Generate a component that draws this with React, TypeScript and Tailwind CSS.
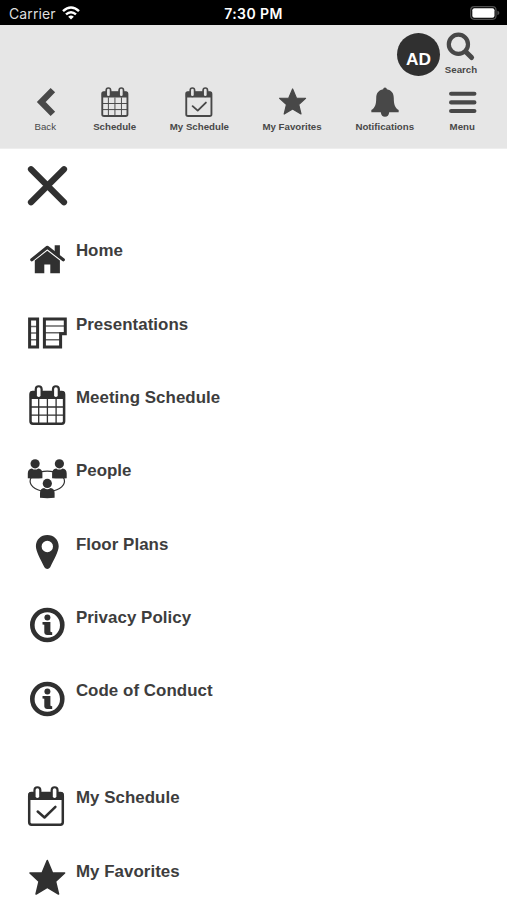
import type { ReactNode } from "react";

const FONT = "font-['Liberation_Sans',Arial,sans-serif]";

function Svg({ children, className }: { children: ReactNode; className: string }) {
  return (
    <svg viewBox="0 0 40 40" fill="currentColor" className={`shrink-0 overflow-visible ${className}`} aria-hidden="true">
      {children}
    </svg>
  );
}

const Rings = () => (
  <>
    {[11.2, 28.4].map((x) => (
      <g key={x}>
        <rect x={x - 4} y="0.2" width="8" height="13.4" rx="4" />
        <rect x={x - 1.8} y="2.2" width="3.6" height="9.8" rx="1.8" className="fill-white" />
      </g>
    ))}
  </>
);

const CalendarShell = () => (
  <>
    <rect x="3" y="7" width="33.6" height="31.7" rx="2.4" fill="none" stroke="currentColor" strokeWidth="2.5" />
    <rect x="2.4" y="6.2" width="34.8" height="7.8" rx="1.5" />
    <Rings />
  </>
);

const CalendarGrid = () => (
  <>
    <CalendarShell />
    <path d="M11.2 14V38M19.9 14V38M28.6 14V38M3 22H36.5M3 30.1H36.5" fill="none" stroke="currentColor" strokeWidth="1.3" />
  </>
);

const CalendarCheck = () => (
  <>
    <CalendarShell />
    <path d="M11.5 25.5L18.3 31.5L29.2 20.8" fill="none" stroke="currentColor" strokeWidth="2.5" strokeLinecap="round" strokeLinejoin="round" />
  </>
);

const Star = () => (
  <path
    d="M19.8 1.6L25 14H37.1L28 22.4L31 35L19.8 28.4L8.6 35L11.6 22.4L2.5 14H14.6Z"
    stroke="currentColor"
    strokeWidth="1.6"
    strokeLinejoin="round"
  />
);

const House = () => (
  <>
    <path d="M4.3 20.8L19.8 8.3L35.8 20.8" fill="none" stroke="currentColor" strokeWidth="3.2" strokeLinecap="round" strokeLinejoin="round" />
    <path d="M27.2 6.3H32.4V17.5L27.2 13.4Z" />
    <path d="M7.3 21.5L19.8 11.8L32.4 21.5V34.2H22.8V25.5H16.8V34.2H7.3Z" />
  </>
);

const Presentations = () => (
  <g fill="none" stroke="currentColor">
    <path d="M2 14.5H10M2 21H10M2 27.7H10M17 14H38M17 20.7H38M17 27.7H33" strokeWidth="1.5" opacity="0.75" />
    <path d="M2.1 7.1H10.1V34.9H2.1Z" strokeWidth="3" />
    <path d="M16.9 7.1H37.8V21.8H33.1V34.9H16.9Z" strokeWidth="3" />
  </g>
);

const Person = ({ x, y }: { x: number; y: number }) => (
  <g transform={`translate(${x} ${y})`}>
    <path d="M-7.3 14.4V9.7Q-7.3 4.9 -3.2 4.6Q0 7 3.2 4.6Q7.3 4.9 7.3 9.7V14.4Q0 15.2 -7.3 14.4Z" />
    <circle r="4.6" />
  </g>
);

const People = () => (
  <>
    <ellipse cx="19.8" cy="22.3" rx="17.2" ry="10.2" fill="none" stroke="currentColor" strokeWidth="1.2" />
    <Person x={7.6} y={4.8} />
    <Person x={31.9} y={4.8} />
    <Person x={19.8} y={24.4} />
  </>
);

const Pin = () => (
  <path
    fillRule="evenodd"
    d="M19.8 3C13.3 3 8.4 7.8 8.4 14.3C8.4 19.5 13 27.2 16.9 35.2Q18 37 19.8 37Q21.6 37 22.7 35.2C26.6 27.2 31.2 19.5 31.2 14.3C31.2 7.8 26.3 3 19.8 3ZM19.8 8.8A5.7 5.7 0 1 1 19.8 20.2A5.7 5.7 0 1 1 19.8 8.8Z"
  />
);

const Info = () => (
  <>
    <circle cx="19.8" cy="20" r="15" fill="none" stroke="currentColor" strokeWidth="4.6" />
    <circle cx="19.9" cy="12.6" r="3" />
    <path d="M15 17H22.9V26.5Q23.1 27.3 24.7 27.3V29.9H19.4Q16.8 29.7 16.8 27.4V19.8L15 19.4Z" />
  </>
);

const Bell = () => (
  <path d="M20 0.5Q22.3 0.5 22.5 3C28.6 4.2 31.7 8.4 31.7 14.5C31.7 23.5 33.5 27.8 38.2 30.5V33.5H25.6Q24.9 39.5 20 39.5Q15.1 39.5 14.4 33.5H1.8V30.5C6.5 27.8 8.3 23.5 8.3 14.5C8.3 8.4 11.4 4.2 17.5 3Q17.7 0.5 20 0.5Z" />
);

const navItems = [
  {
    label: "Back",
    width: "w-6 font-normal",
    icon: <path d="M30.5 4.2L15 20L30.5 35.8" fill="none" stroke="currentColor" strokeWidth="8.4" />,
  },
  { label: "Schedule", width: "w-[46px] font-bold", icon: <CalendarGrid /> },
  { label: "My Schedule", width: "w-[62px] font-bold", icon: <CalendarCheck /> },
  { label: "My Favorites", width: "w-[62px] font-bold", icon: <g transform="translate(1 1)"><Star /></g> },
  { label: "Notifications", width: "w-[62px] font-bold", icon: <Bell /> },
  {
    label: "Menu",
    width: "w-7 font-bold",
    icon: <path d="M5.5 9H36.5M5.5 20.5H36.5M5.5 32H36.5" fill="none" stroke="currentColor" strokeWidth="5.6" strokeLinecap="round" />,
  },
];

const mainLinks = [
  { label: "Home", icon: <House /> },
  { label: "Presentations", icon: <Presentations /> },
  { label: "Meeting Schedule", icon: <CalendarGrid /> },
  { label: "People", icon: <People /> },
  { label: "Floor Plans", icon: <Pin /> },
  { label: "Privacy Policy", icon: <Info /> },
  { label: "Code of Conduct", icon: <Info /> },
];

const personalLinks = [
  { label: "My Schedule", icon: <g transform="translate(-1.3 0)"><CalendarCheck /></g> },
  { label: "My Favorites", icon: <Star /> },
];

function MenuLink({ label, icon }: { label: string; icon: ReactNode }) {
  return (
    <a className="flex h-[73.35px] shrink-0 items-start gap-[8.7px]">
      <Svg className="size-10">
        <g transform="translate(0.5 0)">{icon}</g>
      </Svg>
      <span className="pt-[2.6px] text-[16.9px] leading-5 font-bold tracking-[0.05px] text-[#3d3d3d]">{label}</span>
    </a>
  );
}

export default function App() {
  return (
    <div className={`flex h-[900px] w-[507px] flex-col overflow-hidden bg-white text-[#303030] ${FONT}`}>
      <div className="grid h-[25px] shrink-0 grid-cols-3 items-center bg-black px-[9px] pt-[2px] font-[Inter,sans-serif] text-white">
        <div className="flex items-center gap-1.5">
          <span className="text-[14px] leading-5 tracking-[0.1px] text-[#dedede]">Carrier</span>
          <svg viewBox="0 0 18 14" className="mb-0.5 h-3.5 w-[18px]" fill="none" stroke="white" strokeWidth="2.5">
            <path d="M1 5.2Q9 -2.2 17 5.2M4 8.4Q9 4 14 8.4" />
            <path d="M6.2 10.7Q9 8.2 11.8 10.7L9 13.5Z" fill="white" stroke="none" />
          </svg>
        </div>
        <span className="text-center text-[14px] leading-5 font-semibold tracking-[0.4px]">7:30 PM</span>
        <svg viewBox="0 0 30 14" className="mr-[-2px] mb-[1px] h-3.5 w-[30px] justify-self-end">
          <rect x="0.7" y="0.7" width="25.3" height="12.6" rx="3.5" fill="none" stroke="#505050" strokeWidth="1.2" />
          <rect x="2.3" y="2.2" width="22.2" height="9.6" rx="2" fill="white" />
          <path d="M27.4 4.8Q29.4 5.4 29.4 7T27.4 9.2Z" fill="#505050" />
        </svg>
      </div>

      <header className="flex h-[124px] shrink-0 flex-col border-b border-[#eeeeee] bg-[#e6e6e6] text-[#484848]">
        <div className="flex h-[61.5px] justify-end gap-1 pr-[29px]">
          <div className="mt-[8px] flex size-[43px] items-center justify-center rounded-full bg-[#303030] pt-[9px] text-[17.3px] leading-5 font-bold text-white">
            AD
          </div>
          <div className="flex w-[34px] flex-col items-center pt-[6.5px]">
            <svg viewBox="0 0 30 30" className="h-[30px] w-[30px]" fill="none" stroke="currentColor">
              <circle cx="12.4" cy="12.3" r="9.6" strokeWidth="4.2" />
              <path d="M20 20L25.6 25.6" strokeWidth="5" strokeLinecap="round" />
            </svg>
            <span className="mt-[2px] text-[9.7px] leading-3 font-bold">Search</span>
          </div>
        </div>
        <nav className="flex gap-[30.7px] pl-[33.3px] [&_.fill-white]:fill-[#e6e6e6] [&>*:first-child]:mr-[3.7px] [&>*:last-child]:ml-[1.8px]">
          {navItems.map((item) => (
            <a key={item.label} className={`flex flex-col items-center ${item.width}`}>
              <Svg className="size-[30px]">{item.icon}</Svg>
              <span className="mt-[4.5px] text-[9.7px] leading-3 whitespace-nowrap">{item.label}</span>
            </a>
          ))}
        </nav>
      </header>

      <main className="flex min-h-0 flex-1 flex-col pt-[16.5px] pl-[27.2px]">
        <button className="flex h-[73.2px] shrink-0 items-start" aria-label="Close">
          <Svg className="size-10">
            <path d="M4 3.3L37 36.3M37 3.3L4 36.3" fill="none" stroke="currentColor" strokeWidth="6.2" strokeLinecap="round" />
          </Svg>
        </button>
        {mainLinks.map((item) => (
          <MenuLink key={item.label} {...item} />
        ))}
        <div className="flex flex-col pt-[33.7px]">
          {personalLinks.map((item) => (
            <MenuLink key={item.label} {...item} />
          ))}
        </div>
      </main>
    </div>
  );
}
